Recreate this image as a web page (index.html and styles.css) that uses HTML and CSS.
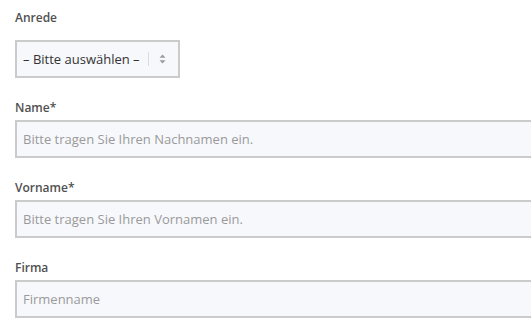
FILE: index.html
```html
<!DOCTYPE html>
<html lang="de">
<head>
<meta charset="utf-8">
<title>Formular</title>
<link rel="stylesheet" href="styles.css">
</head>
<body>
<form class="form">
  <div class="field">
    <label class="label label-select" for="anrede">Anrede</label>
    <div class="select-wrap">
      <select id="anrede" class="select">
        <option>– Bitte auswählen –</option>
        <option>Herr</option>
        <option>Frau</option>
      </select>
      <span class="select-divider"></span>
      <svg class="select-arrows" width="7" height="10" viewBox="0 0 7 10"><path d="M3.5 0.5 L6.5 3.8 H0.5 Z M3.5 9.5 L6.5 6.2 H0.5 Z" fill="#9a9a9a"/></svg>
    </div>
  </div>
  <div class="field">
    <label class="label" for="name">Name*</label>
    <input id="name" class="input" type="text" placeholder="Bitte tragen Sie Ihren Nachnamen ein.">
  </div>
  <div class="field">
    <label class="label" for="vorname">Vorname*</label>
    <input id="vorname" class="input" type="text" placeholder="Bitte tragen Sie Ihren Vornamen ein.">
  </div>
  <div class="field">
    <label class="label" for="firma">Firma</label>
    <input id="firma" class="input" type="text" placeholder="Firmenname">
  </div>
</form>
</body>
</html>
```

FILE: styles.css
```css
html, body {
  margin: 0;
  padding: 0;
  overflow: hidden;
  background: #ffffff;
}

body {
  font-family: "Open Sans", "Liberation Sans", sans-serif;
}

.form {
  padding: 10px 0 0 15px;
}

.field {
  margin-bottom: 22px;
}

.label {
  display: block;
  font-size: 12px;
  line-height: 16px;
  font-weight: 600;
  color: #505050;
  margin-bottom: 4px;
}

.label-select {
  margin-bottom: 14px;
}

.select-wrap {
  position: relative;
  width: 165px;
  height: 38px;
}

.select {
  display: block;
  appearance: none;
  -webkit-appearance: none;
  box-sizing: border-box;
  width: 165px;
  height: 38px;
  border: 2px solid #cbcbcb;
  border-radius: 0;
  background: #f7f8fc;
  font-family: "Open Sans", "Liberation Sans", sans-serif;
  font-size: 13px;
  color: #333333;
  padding: 0 0 0 6px;
  margin: 0;
  outline: none;
}

.select-divider {
  position: absolute;
  left: 133px;
  top: 12px;
  width: 1px;
  height: 14px;
  background: #dcdcdc;
}

.select-arrows {
  position: absolute;
  left: 144px;
  top: 14px;
}

.input {
  display: block;
  box-sizing: border-box;
  width: 540px;
  height: 38px;
  border: 2px solid #cbcbcb;
  border-radius: 0;
  background: #f7f8fc;
  font-family: "Open Sans", "Liberation Sans", sans-serif;
  font-size: 13px;
  color: #333333;
  padding: 0 0 0 6px;
  margin: 0;
  outline: none;
}

.input::placeholder {
  color: #9a9a9a;
  opacity: 1;
}
```
